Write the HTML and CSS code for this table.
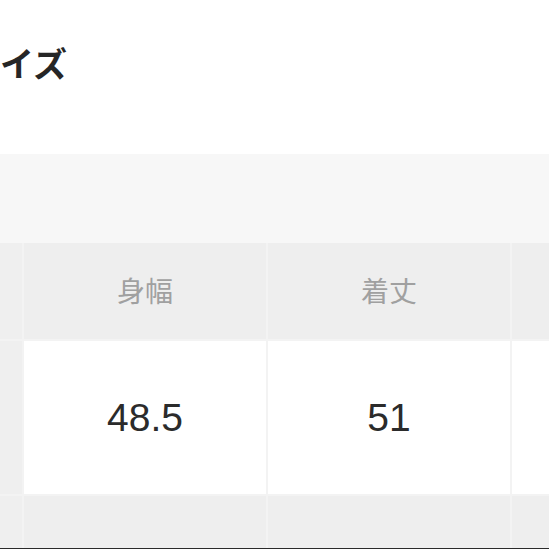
FILE: index.html
```html
<!DOCTYPE html>
<html lang="ja">
<head>
<meta charset="utf-8">
<link rel="stylesheet" href="styles.css">
</head>
<body>
<div class="page">
  <h2 class="title">イズ</h2>
  <div class="band"></div>
  <div class="table">
    <div class="cell head side"></div>
    <div class="cell head">身幅</div>
    <div class="cell head">着丈</div>
    <div class="cell head"></div>
    <div class="cell side"></div>
    <div class="cell data">48.5</div>
    <div class="cell data">51</div>
    <div class="cell data"></div>
    <div class="cell foot side"></div>
    <div class="cell foot"></div>
    <div class="cell foot"></div>
    <div class="cell foot"></div>
  </div>
  <div class="edge"></div>
</div>
</body>
</html>
```
FILE: styles.css
```css
html, body {
  margin: 0;
  padding: 0;
  background: #ffffff;
}
.page {
  width: 549px;
  height: 549px;
  overflow: hidden;
  display: flex;
  flex-direction: column;
}
.title {
  margin: 43px 0 0 0;
  height: 40px;
  line-height: 40px;
  font-family: "Noto Sans CJK JP", sans-serif;
  font-size: 34px;
  font-weight: 700;
  color: #262626;
  white-space: nowrap;
}
.band {
  margin-top: 71px;
  height: 89px;
  background: #f7f7f7;
  flex: none;
}
.table {
  display: grid;
  grid-template-columns: 22px 242px 242px 242px;
  grid-template-rows: 96px 153px 52px;
  gap: 2px;
  background: #f3f3f3;
  width: 760px;
  flex: none;
}
.cell {
  display: flex;
  align-items: center;
  justify-content: center;
  background: #eeeeee;
}
.head {
  font-family: "Noto Sans CJK JP", sans-serif;
  font-size: 28px;
  color: #a0a0a0;
  padding-bottom: 3px;
}
.data {
  background: #ffffff;
  font-family: "Liberation Sans", Arial, sans-serif;
  font-size: 39px;
  color: #2b2b2b;
}
.side {
  background: #efefef;
}
.edge {
  height: 2px;
  background: #2a2a2a;
  flex: none;
}
```
